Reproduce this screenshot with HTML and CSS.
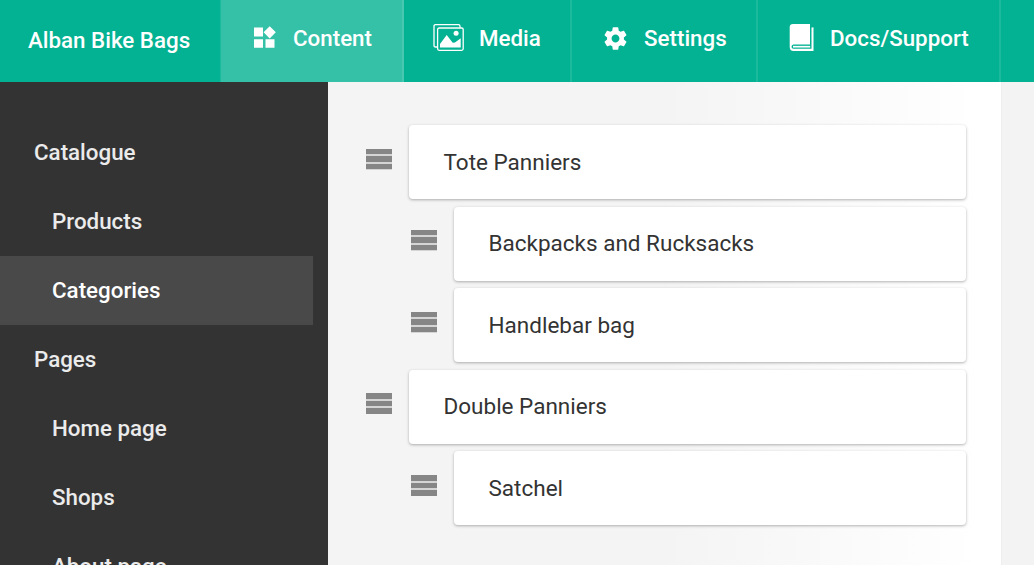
FILE: index.html
```html
<!DOCTYPE html>
<html lang="en">
<head>
<meta charset="utf-8">
<title>Alban Bike Bags</title>
<link rel="stylesheet" href="styles.css">
</head>
<body>
<header class="topbar">
  <a class="brand">Alban Bike Bags</a>
  <nav class="tabs">
    <a class="tab tab-content active">
      <svg class="icon" width="32" height="32" viewBox="0 0 32 32" fill="#fff"><path d="M5 5.500h9v9H5zM5 17.200h9v8.600H5zM16.500 17.200h9v8.600h-9zM20.700 4.200l6.100 6.100-6.100 6.100-6.100-6.100z"/></svg>
      <span>Content</span>
    </a>
    <a class="tab tab-media">
      <svg class="icon" width="32" height="32" viewBox="0 0 32 32" fill="none" stroke="#fff" stroke-width="1.300"><path d="M5.500 25H3.500Q2 25 2 23.500V4.200q0-1.500 1.500-1.500H26.500Q28 2.700 28 4.200v1.600"/><rect x="5.600" y="6" width="25.600" height="22.300" rx="1.500"/><path d="M8 25.500v-3.500l6.700-9 6 7.800 2.300-.3 5.700-4.300v9.300z" fill="#fff" stroke="none"/><circle cx="24.100" cy="11.300" r="2.500" fill="#fff" stroke="none"/></svg>
      <span>Media</span>
    </a>
    <a class="tab tab-settings">
      <svg class="icon" width="27" height="27" viewBox="0 0 24 24" fill="#fff"><path d="M19.430 12.980c.04-.32.070-.64.070-.98s-.03-.66-.07-.98l2.110-1.650c.19-.15.240-.42.120-.64l-2-3.460c-.12-.22-.39-.3-.61-.22l-2.490 1c-.52-.4-1.080-.73-1.690-.98l-.38-2.650C14.460 2.180 14.250 2 14 2h-4c-.25 0-.46.180-.49.420l-.38 2.650c-.61.250-1.170.59-1.690.98l-2.490-1c-.23-.09-.49 0-.61.220l-2 3.460c-.13.220-.07.490.12.640l2.110 1.650c-.04.320-.07.650-.07.980s.03.660.070.980l-2.110 1.650c-.19.150-.24.420-.12.640l2 3.460c.12.220.39.300.61.220l2.490-1c.52.400 1.080.73 1.690.98l.38 2.650c.03.240.24.420.49.420h4c.25 0 .46-.18.490-.42l.38-2.650c.61-.25 1.170-.59 1.690-.98l2.490 1c.23.090.49 0 .61-.22l2-3.460c.12-.22.070-.49-.12-.64l-2.110-1.650zM12 15.500c-1.930 0-3.500-1.570-3.500-3.500s1.570-3.500 3.500-3.500 3.500 1.570 3.500 3.500-1.570 3.500-3.500 3.500z"/></svg>
      <span>Settings</span>
    </a>
    <a class="tab tab-docs">
      <svg class="icon" width="26" height="30" viewBox="0 0 26 30"><path d="M4 1H21V4.300H24.500V28H4.500Q.7 28 .7 24V4Q.7 1 4 1z" fill="#fff"/><path d="M21 1H24.500V4.300H22.500V25.700H4.500Q2.500 25.500 2.500 23.700T4.500 21.500H21z" fill="#03b292"/><path d="M4 23.700H21.200" stroke="#fff" stroke-width="1.700"/></svg>
      <span>Docs/Support</span>
    </a>
  </nav>
</header>
<div class="layout">
  <aside class="sidebar">
    <a class="side-link">Catalogue</a>
    <a class="side-link sub">Products</a>
    <a class="side-link sub current">Categories</a>
    <a class="side-link">Pages</a>
    <a class="side-link sub">Home page</a>
    <a class="side-link sub">Shops</a>
    <a class="side-link sub">About page</a>
  </aside>
  <main class="panel">
    <div class="row"><i class="grip"></i><div class="card">Tote Panniers</div></div>
    <div class="row nested"><i class="grip"></i><div class="card">Backpacks and Rucksacks</div></div>
    <div class="row nested"><i class="grip"></i><div class="card">Handlebar bag</div></div>
    <div class="row"><i class="grip"></i><div class="card">Double Panniers</div></div>
    <div class="row nested"><i class="grip"></i><div class="card">Satchel</div></div>
  </main>
</div>
</body>
</html>
```
FILE: styles.css
```css
* { box-sizing: border-box; }
body {
  margin: 0;
  height: 565px;
  overflow: hidden;
  background: #f3f3f3;
  font-family: Roboto, "Liberation Sans", sans-serif;
  font-size: 22.500px;
  color: #333;
}
.topbar {
  display: flex;
  height: 82px;
  background: #03b292;
  color: #fff;
  font-size: 22.350px;
  font-weight: 500;
}
.brand {
  width: 220px;
  padding-left: 28px;
  line-height: 80px;
  white-space: nowrap;
}
.tabs { display: flex; }
.tab {
  display: flex;
  align-items: center;
  height: 82px;
  padding-bottom: 6px;
  border-right: 2px solid #1cba9d;
  white-space: nowrap;
}
.tab .icon { flex: none; display: block; }
.tab-content { width: 184px; padding-left: 29px; gap: 12px; }
.tab-media { width: 168px; padding-left: 28px; gap: 15px; }
.tab-settings { width: 186px; padding-left: 30px; gap: 15px; }
.tab-docs { width: 243px; padding-left: 31px; gap: 15px; }
.tab.active { background: #34c1a7; border-right-color: #48c8b0; box-shadow: inset 1px 0 #1cba9d; }
.layout { display: flex; height: 483px; overflow: hidden; }
.sidebar {
  flex: none;
  width: 328px;
  padding-top: 36px;
  background: #333;
  color: #ebebeb;
  font-size: 22.350px;
  font-weight: 500;
}
.side-link {
  display: block;
  width: 313px;
  height: 69px;
  padding-left: 34px;
  line-height: 68px;
}
.sub { padding-left: 52px; }
.current { background: #494949; color: #fff; }
.panel {
  display: flex;
  flex-direction: column;
  gap: 7.500px;
  width: 674px;
  padding: 43px 35px 0 38px;
  border-right: 1px solid #eee;
  background: linear-gradient(to right, #f4f4f4 50%, #fff 97%);
}
.row { display: flex; align-items: flex-start; gap: 17px; }
.nested { padding-left: 45px; }
.grip {
  flex: none;
  width: 26px;
  height: 21px;
  margin-top: 23.500px;
  background: repeating-linear-gradient(#868686 0 5.500px, #d5d5d5 5.500px 7.500px);
}
.card {
  flex: 1;
  height: 74px;
  padding: .8px 0 0 34.500px;
  border-radius: 4px;
  background: #fff;
  box-shadow: 0 1px 3px rgba(0, 0, 0, .3);
  line-height: 73px;
}
```
